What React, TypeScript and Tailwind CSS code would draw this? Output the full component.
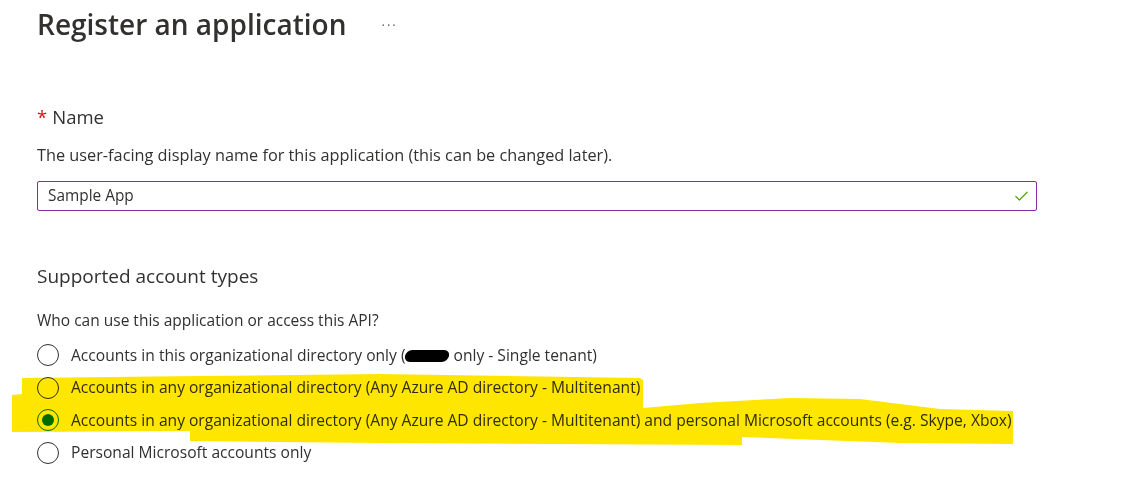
import { Check } from 'lucide-react';

const FONT = "font-['Open_Sans',sans-serif]";

type Option = { id: string; label: React.ReactNode };

const OPTIONS: Option[] = [
  {
    id: 'single',
    label: (
      <>
        Accounts in this organizational directory only (
        <span className="inline-block h-[12px] w-[44px] -skew-x-12 rounded-full bg-black align-[-1px]" />{' '}
        only - Single tenant)
      </>
    ),
  },
  { id: 'multi', label: 'Accounts in any organizational directory (Any Azure AD directory - Multitenant)' },
  {
    id: 'multi-personal',
    label:
      'Accounts in any organizational directory (Any Azure AD directory - Multitenant) and personal Microsoft accounts (e.g. Skype, Xbox)',
  },
  { id: 'personal', label: 'Personal Microsoft accounts only' },
];

function Radio({ checked }: { checked: boolean }) {
  return (
    <span
      className={
        'flex h-[22px] w-[22px] shrink-0 items-center justify-center rounded-full border ' +
        (checked ? 'border-[#0078d4]' : 'border-[#323130]')
      }
    >
      {checked && <span className="h-[12px] w-[12px] rounded-full bg-[#0078d4]" />}
    </span>
  );
}

export default function App() {
  const selected = 'multi-personal';
  return (
    <div className={`relative h-[496px] w-[1145px] overflow-hidden bg-white text-[#323130] ${FONT}`}>
      <div className="pl-[37px] pt-[5px]">
        <div className="flex items-center">
          <h1 className="text-[28px] font-semibold leading-[38px]">Register an application</h1>
          <span className="ml-[35px] mt-[4px] text-[13px] tracking-[2px] text-[#605e5c]">···</span>
        </div>

        <div className="mt-[61px] flex items-center text-[18.5px] leading-[26px]">
          <span className="mr-[5px] text-[#e00b1c]">*</span>
          <span>Name</span>
        </div>
        <p className="mt-[14px] text-[16.3px] leading-[22px]">
          The user-facing display name for this application (this can be changed later).
        </p>
        <div className="mt-[15px] flex h-[30px] w-[1000px] items-center justify-between rounded-[2px] border border-[#8a2da5] pl-[10px] pr-[6px] text-[15.4px]">
          <span>Sample App</span>
          <Check className="h-[17px] w-[17px] text-[#57a300]" strokeWidth={1.7} />
        </div>

        <h2 className="mt-[52px] text-[19px] leading-[26px]">Supported account types</h2>
        <p className="mt-[20px] text-[15.5px] leading-[22px]">Who can use this application or access this API?</p>

        <div className="mt-[8px] flex flex-col">
          {OPTIONS.map((o) => (
            <div key={o.id} className="flex h-[32.6px] items-center gap-[12px] text-[15.6px]">
              <Radio checked={o.id === selected} />
              <span className="whitespace-nowrap">{o.label}</span>
            </div>
          ))}
        </div>
      </div>

      {/* highlighter marks */}
      <svg
        className="pointer-events-none absolute left-0 top-0 mix-blend-multiply"
        width="1145"
        height="496"
      >
        <path
          d="M22,378 L200,376 L380,374 L640,378 L643,380 L643,408 L700,403 L790,398 L860,399 L940,409 L1013,411 L1013,444 L900,443 L742,437 L742,445 L380,443 L190,441 L190,431 L12,432 L12,395 L22,394 Z"
          fill="#ffe600"
        />
      </svg>
    </div>
  );
}
